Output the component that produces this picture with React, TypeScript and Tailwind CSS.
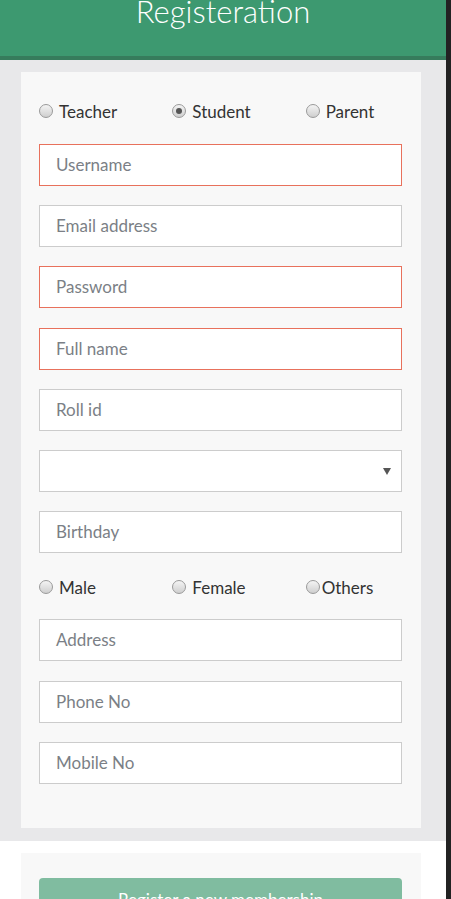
import React from "react";

const font = { fontFamily: "Lato, 'Open Sans', sans-serif" };

function Radio({ checked }: { checked?: boolean }) {
    return (
        <span className="w-[14px] h-[14px] rounded-full border border-[#9a9a9a] bg-linear-to-b from-[#f4f4f4] to-[#cfcfcf] flex items-center justify-center shrink-0">
            {checked && <span className="w-[6px] h-[6px] rounded-full bg-[#555]" />}
        </span>
    );
}

function RadioRow({ items, checkedIndex }: { items: { label: string; gap: boolean }[]; checkedIndex: number }) {
    return (
        <div className="-mx-[18px] grid grid-cols-3 h-[26px] items-center">
            {items.map((it, i) => (
                <label key={it.label} className={`flex items-center px-[18px] text-[17px] text-[#333] ${it.gap ? "gap-[6px]" : "gap-[2px]"}`}>
                    <Radio checked={i === checkedIndex} />
                    <span className="leading-none pt-[1px]">{it.label}</span>
                </label>
            ))}
        </div>
    );
}

function Field({ placeholder, error, extra }: { placeholder: string; error?: boolean; extra?: string }) {
    return (
        <div
            className={`h-[42px] w-[363px] bg-white border flex items-center px-[16px] text-[17px] text-[#7b7f86] ${error ? "border-[#e8715c]" : "border-[#cccccc]"} ${extra ?? ""}`}
        >
            {placeholder}
        </div>
    );
}

export default function App() {
    return (
        <div className="flex w-[451px] h-[899px] overflow-hidden" style={font}>
            <div className="w-[446px] flex flex-col bg-white">
                <header className="shrink-0 h-[60px] bg-[#3d9970] border-b-4 border-[#367c5c] flex justify-center">
                    <h1 className="text-[31px] font-light text-white leading-none -mt-[4px] h-[32px]">Registeration</h1>
                </header>

                <div className="shrink-0 bg-[#e8e8ea] pt-[12px] pb-[13px] pl-[21px]">
                    <div className="w-[400px] bg-[#f8f8f8] pt-[26px] pb-[44px] px-[18px] flex flex-col">
                        <RadioRow
                            checkedIndex={1}
                            items={[
                                { label: "Teacher", gap: true },
                                { label: "Student", gap: true },
                                { label: "Parent", gap: true },
                            ]}
                        />
                        <div className="mt-[20px] flex flex-col gap-[19px]">
                            <Field placeholder="Username" error />
                            <Field placeholder="Email address" />
                            <Field placeholder="Password" error />
                            <Field placeholder="Full name" error extra="mt-[1px]" />
                            <Field placeholder="Roll id" />
                            <div className="h-[42px] w-[363px] bg-white border border-[#cccccc] flex items-center justify-end pr-[10px]">
                                <svg width="8" height="7" viewBox="0 0 8 7">
                                    <path d="M0 0h8L4 7z" fill="#555" />
                                </svg>
                            </div>
                            <Field placeholder="Birthday" />
                        </div>
                        <div className="mt-[21px]">
                            <RadioRow
                                checkedIndex={-1}
                                items={[
                                    { label: "Male", gap: true },
                                    { label: "Female", gap: true },
                                    { label: "Others", gap: false },
                                ]}
                            />
                        </div>
                        <div className="mt-[19px] flex flex-col gap-[19px]">
                            <Field placeholder="Address" />
                            <Field placeholder="Phone No" extra="mt-[1px]" />
                            <Field placeholder="Mobile No" />
                        </div>
                    </div>
                </div>

                <div className="shrink-0 pt-[12px] pl-[21px]">
                    <div className="w-[400px] h-[100px] bg-[#f8f8f8] pt-[25px] px-[18px]">
                        <button className="w-[363px] h-[42px] rounded-[4px] bg-[#80bca0] text-white text-[17px] flex justify-center pt-[9px]">
                            Register a new membership
                        </button>
                    </div>
                </div>
            </div>
            <div className="w-[5px] bg-[#222]" />
        </div>
    );
}
